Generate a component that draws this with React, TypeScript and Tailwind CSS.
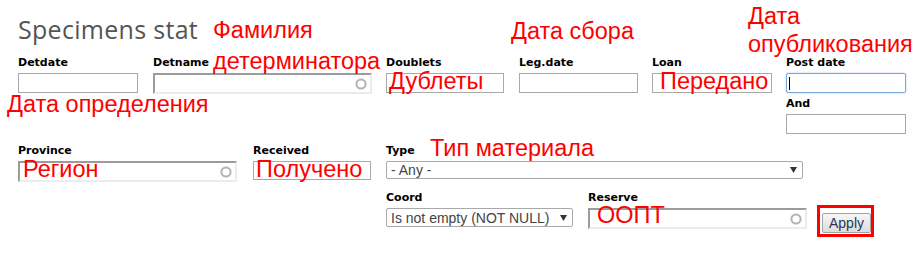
import React from "react";

const labelCls =
  "block font-['DejaVu_Sans',sans-serif] font-bold text-[11px] leading-[16px] text-black mb-[2px] whitespace-nowrap";

function Label({ children }: { children: React.ReactNode }) {
  return <label className={labelCls}>{children}</label>;
}

function TextBox({ h = "h-[20px]" }: { h?: string }) {
  return <div className={`w-full ${h} border border-[#a9a9a9] bg-white`} />;
}

function AutoBox() {
  return (
    <div className="w-full h-[21px] flex items-center justify-end pr-[3px] bg-white border-2 border-t-[#9b9b9b] border-l-[#9b9b9b] border-r-[#ececec] border-b-[#ececec]">
      <svg width="12" height="12" viewBox="0 0 12 12">
        <circle cx="6" cy="6" r="4.6" fill="none" stroke="#b3b3b3" strokeWidth="2" />
      </svg>
    </div>
  );
}

function SelectBox({ text, h }: { text: string; h: string }) {
  return (
    <div
      className={`w-full ${h} flex items-center justify-between pl-[4px] pr-[5px] border border-[#a9a9a9] rounded-[2px] bg-white font-['Liberation_Sans',Arial,sans-serif] text-[14px] text-[#444] leading-none whitespace-nowrap`}
    >
      <span>{text}</span>
      <svg width="7" height="6" viewBox="0 0 7 6" className="shrink-0">
        <polygon points="0,0 7,0 3.5,6" fill="#333" />
      </svg>
    </div>
  );
}

const notes: { t: string; cls: string }[] = [
  { t: "Фамилия", cls: "left-[213px] top-[19px]" },
  { t: "детерминатора", cls: "left-[213px] top-[50px]" },
  { t: "Дата сбора", cls: "left-[511px] top-[20px]" },
  { t: "Дата", cls: "left-[748px] top-[5px]" },
  { t: "опубликования", cls: "left-[748px] top-[33px]" },
  { t: "Дата определения", cls: "left-[7px] top-[93px]" },
  { t: "Дублеты", cls: "left-[389px] top-[70px]" },
  { t: "Передано", cls: "left-[660px] top-[70px]" },
  { t: "Регион", cls: "left-[23px] top-[158px]" },
  { t: "Получено", cls: "left-[256px] top-[158px]" },
  { t: "Тип материала", cls: "left-[430px] top-[137px]" },
  { t: "ООПТ", cls: "left-[597px] top-[204px]" },
];

export default function App() {
  return (
    <div className="relative w-[919px] h-[258px] bg-white overflow-hidden">
      <div className="pl-[18px] pt-[13px]">
        <h2 className="font-['Open_Sans',sans-serif] text-[25px] leading-[32px] tracking-[0.3px] text-[#555] mb-[10px]">
          Specimens stat
        </h2>

        {/* row 1 */}
        <div className="flex items-start">
          <div className="w-[120px] shrink-0 mr-[15px]">
            <Label>Detdate</Label>
            <TextBox />
          </div>
          <div className="w-[219px] shrink-0 mr-[14px]">
            <Label>Detname</Label>
            <AutoBox />
          </div>
          <div className="w-[118px] shrink-0 mr-[15px]">
            <Label>Doublets</Label>
            <TextBox />
          </div>
          <div className="w-[119px] shrink-0 mr-[14px]">
            <Label>Leg.date</Label>
            <TextBox />
          </div>
          <div className="w-[120px] shrink-0 mr-[14px]">
            <Label>Loan</Label>
            <TextBox />
          </div>
          <div className="w-[120px] shrink-0">
            <Label>Post date</Label>
            <div className="w-full h-[20px] border border-[#7aa7dd] rounded-[2px] bg-white shadow-[0_0_2px_#a9c8ee] flex items-center pl-[2px]">
              <div className="w-px h-[13px] bg-black" />
            </div>
            <div className="mt-[3px]">
              <Label>And</Label>
            </div>
            <TextBox />
          </div>
        </div>

        {/* row 2 */}
        <div className="flex items-start mt-[9px]">
          <div className="w-[219px] shrink-0 mr-[16px]">
            <Label>Province</Label>
            <AutoBox />
          </div>
          <div className="w-[118px] shrink-0 mr-[15px]">
            <Label>Received</Label>
            <TextBox h="h-[19px]" />
          </div>
          <div className="w-[417px] shrink-0">
            <Label>Type</Label>
            <SelectBox text="- Any -" h="h-[18px]" />

            <div className="flex items-start mt-[11px]">
              <div className="w-[187px] shrink-0 mr-[15px]">
                <Label>Coord</Label>
                <SelectBox text="Is not empty (NOT NULL)" h="h-[19px]" />
              </div>
              <div className="w-[219px] shrink-0 mr-[10px]">
                <Label>Reserve</Label>
                <AutoBox />
              </div>
              <div className="shrink-0 mt-[15px] border-[3px] border-[#ff0000] pl-[2px] pt-[2px]">
                <button className="w-[49px] h-[20px] border border-[#a3a3a3] rounded-[2px] bg-gradient-to-b from-[#f7f7f7] to-[#dcdcdc] font-['Liberation_Sans',Arial,sans-serif] text-[14px] leading-none text-[#27395a]">
                  Apply
                </button>
              </div>
            </div>
          </div>
        </div>
      </div>

      {notes.map((n) => (
        <div
          key={n.t}
          className={`absolute ${n.cls} font-['Liberation_Sans',Arial,sans-serif] text-[23.5px] leading-none text-[#ff0000] whitespace-nowrap`}
        >
          {n.t}
        </div>
      ))}
    </div>
  );
}
